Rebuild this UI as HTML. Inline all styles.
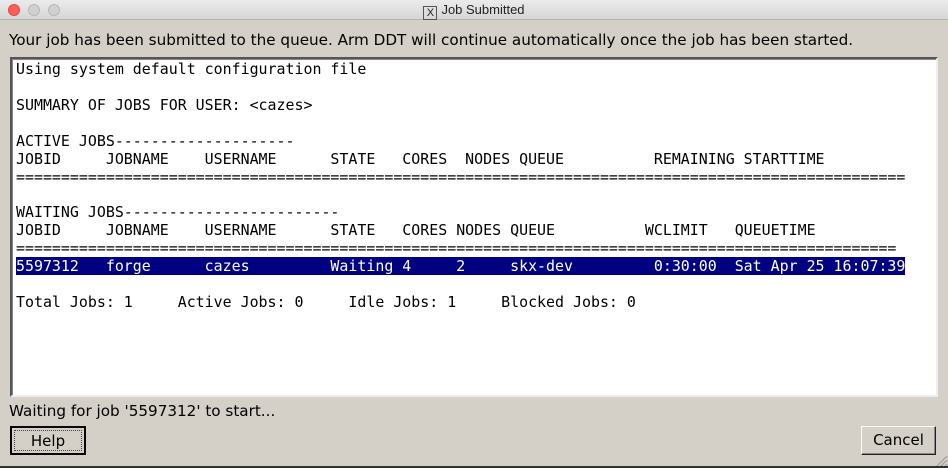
<!DOCTYPE html>
<html><head><style>
*{margin:0;padding:0;box-sizing:border-box}
body{width:948px;height:468px;background:#d4d0c8;position:relative;overflow:hidden;font-family:"DejaVu Sans",sans-serif}
.title{position:absolute;left:0;top:0;width:948px;height:20px;background:linear-gradient(#ebebeb,#d6d6d6);border-bottom:1px solid #b4b4b4}
.dot{position:absolute;top:4px;width:12px;height:12px;border-radius:50%}
.ttext{position:absolute;left:0;width:948px;top:2px;text-align:center;font-size:13px;color:#222;font-family:"Liberation Sans",sans-serif}
.lbl{position:absolute;left:9px;font-size:15.2px;color:#000}
.box{position:absolute;left:10px;top:57px;width:928px;height:340px;background:#fff;border:2px solid;border-color:#555 #eee #eee #555;box-shadow:inset 1px 1px 0 #888}
pre{position:absolute;left:16px;top:61px;font-family:"DejaVu Sans Mono",monospace;font-size:14.93px;line-height:17.92px;color:#000}
.hl{background:#000080;color:#fff}
.btn{position:absolute;top:426px;height:29px;font-size:15px;text-align:center;line-height:27px;background:#d4d0c8}
</style></head><body>
<div class="title">
<div class="dot" style="left:8px;background:#fc5f57;border:1px solid #de4a40"></div>
<div class="dot" style="left:28px;background:#d0d0d0;border:1px solid #b8b8b8"></div>
<div class="dot" style="left:48px;background:#d0d0d0;border:1px solid #b8b8b8"></div>
<div class="ttext"><span style="display:inline-block;width:14px;height:14px;border:1px solid #555;font-size:11px;line-height:12px;vertical-align:-2px;margin-right:4px">X</span>Job Submitted</div>
</div>
<div class="lbl" style="top:31px">Your job has been submitted to the queue. Arm DDT will continue automatically once the job has been started.</div>
<div class="box"></div>
<pre>Using system default configuration file

SUMMARY OF JOBS FOR USER: &lt;cazes&gt;

ACTIVE JOBS--------------------
JOBID     JOBNAME    USERNAME      STATE   CORES  NODES QUEUE          REMAINING STARTTIME
===================================================================================================

WAITING JOBS------------------------
JOBID     JOBNAME    USERNAME      STATE   CORES NODES QUEUE          WCLIMIT   QUEUETIME
==================================================================================================
<span class="hl">5597312   forge      cazes         Waiting 4     2     skx-dev         0:30:00  Sat Apr 25 16:07:39</span>

Total Jobs: 1     Active Jobs: 0     Idle Jobs: 1     Blocked Jobs: 0</pre>
<div class="lbl" style="top:402px">Waiting for job '5597312' to start...</div>
<div class="btn" style="left:10px;width:76px;border:2px solid #000;"><div style="position:absolute;left:2px;top:2px;right:2px;bottom:2px;border:1px dotted #444"></div><span style="position:relative">Help</span></div>
<div class="btn" style="left:861px;width:75px;border:1px solid;border-color:#fff #222 #222 #fff;box-shadow:inset -1px -1px 0 #888">Cancel</div>
<svg style="position:absolute;left:934px;top:454px" width="14" height="14"><path d="M2 13L13 2M6 13L13 6M10 13L13 10" stroke="#999" stroke-width="1"/></svg>
<div style="position:absolute;left:0;top:466px;width:948px;height:2px;background:#333"></div>
</body></html>
